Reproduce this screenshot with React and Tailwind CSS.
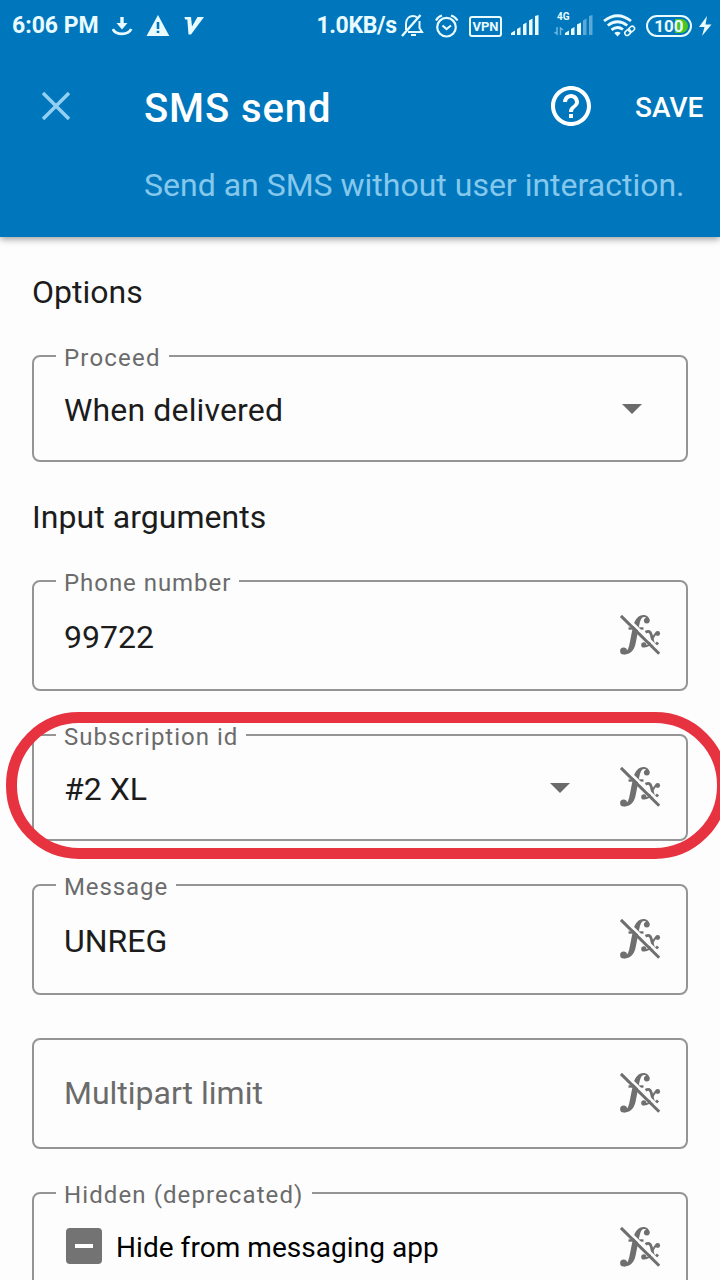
import React from "react";

function FxOff() {
  return (
    <svg className="mb-[2px] h-11 w-11 shrink-0" viewBox="0 0 44 44" fill="none">
      <path
        d="M31.500 8C31.500 4 28.500 2 25.500 2C20.500 2 17.500 6 15.800 11C14 17 13 24 11.500 31C10.500 36 9 39 6 39.200V41.500C12 41.500 16 37.500 17.500 31C19 24 20 17 21.500 11C22.500 7 23.500 4.200 26 4C27.500 4 28.300 4.600 28.500 5.500Z"
        fill="#6f6f6f"
      />
      <circle cx="28.800" cy="7.600" r="2.900" fill="#6f6f6f" />
      <circle cx="5.600" cy="38" r="3.500" fill="#6f6f6f" />
      <path d="M10.500 15.500H25.500" stroke="#6f6f6f" strokeWidth="2.400" />
      <path d="M27.500 19.300C30.500 17.600 32.500 18.500 33.200 21.500L35 29C35.600 32 37.500 32.500 40 29.500" stroke="#6f6f6f" strokeWidth="2.800" />
      <path d="M40 20C36 18.500 33.500 30.500 30 32.500C28.500 33.500 27 33 26 32" stroke="#6f6f6f" strokeWidth="2" />
      <circle cx="39.700" cy="20.500" r="2.400" fill="#6f6f6f" />
      <circle cx="25.800" cy="31.900" r="2.600" fill="#6f6f6f" />
      <path d="M5.500 1.500L43.500 38.500" stroke="#fdfdfd" strokeWidth="2.600" />
      <path d="M2.900 2.900L41.200 40.700" stroke="#6f6f6f" strokeWidth="3" />
    </svg>
  );
}

function Caret() {
  return (
    <svg className="h-[10px] w-5 shrink-0" viewBox="0 0 20 10">
      <path d="M0 0H20L10 10Z" fill="#6b6b6b" />
    </svg>
  );
}

function Field({ label, labelClass = "tracking-[1px]", boxClass, children }) {
  return (
    <div className={`relative flex shrink-0 items-center rounded-[8px] border-2 border-[#959595] pl-[30px] pr-6 ${boxClass}`}>
      {label && (
        <span className={`absolute -top-[13px] left-[22px] whitespace-nowrap bg-[#fdfdfd] px-2 text-[24px] leading-7 text-[#6b6b6b] ${labelClass}`}>
          {label}
        </span>
      )}
      {children}
    </div>
  );
}

function StatusBar() {
  return (
    <div className="flex h-[52px] items-center pl-3 text-[#e9fbff]">
      <span className="w-[101px] whitespace-nowrap text-[23px] font-bold leading-[30px]">6:06 PM</span>
      <svg className="h-[50px] w-[100px] shrink-0" viewBox="112 0 100 50" fill="none">
        <path d="M122 16V25" stroke="currentColor" strokeWidth="3.400" />
        <path d="M116.500 22H127.500L122 28.500Z" fill="currentColor" />
        <path d="M112.800 28C116 34.500 128 34.500 131.200 28" stroke="currentColor" strokeWidth="2.800" />
        <path d="M158 14L169.300 35H146.500Z" fill="currentColor" />
        <path d="M158 21V28M158 29.800V32" stroke="#0077bd" strokeWidth="2.600" />
        <path d="M184.500 16H191L192 25.500L197.500 16H204L191 33.500H188.500L187.300 18.500H185Z" fill="currentColor" />
      </svg>
      <span className="ml-[104px] w-[84px] whitespace-nowrap text-[23px] font-bold leading-[30px] tracking-[-0.35px]">1.0KB/s</span>
      <svg className="h-[50px] w-[68px] shrink-0" viewBox="400 0 68 50" fill="none" stroke="currentColor" strokeWidth="2">
        <path d="M402 35L420.500 14" strokeWidth="2.400" />
        <path d="M406 29V23C406 17 410 15 413 15Q415.500 15 417 16.500M419.500 20V27L422 31H408M411 34H416" />
        <circle cx="446.500" cy="26.200" r="9.300" strokeWidth="2.200" />
        <path d="M442.500 24.500L446.500 28L451 24.500M436 19.500Q438 15.500 442 14.500M451 14.500Q455 15.500 457.500 19.500" strokeWidth="2.200" />
      </svg>
      <span className="ml-[1px] flex h-[21px] w-[33px] shrink-0 items-center justify-center rounded-[3px] border-2 border-current text-[13px] font-bold leading-none">
        VPN
      </span>
      <svg className="h-[50px] w-[143px] shrink-0" viewBox="502 0 143 50" fill="none">
        <path d="M511 34V32L515 29.500V34ZM517 34V28L520.500 26V34ZM523 34V23.500L526.500 21.500V34ZM529 34V19.500L532.500 17.500V34ZM535 34V15L538.500 14V34Z" fill="currentColor" />
        <text x="557" y="19" fill="currentColor" fontSize="10" fontWeight="700" fontFamily="Roboto, sans-serif">4G</text>
        <path d="M557 26V33L554.500 31M560.500 34V27L563 29" stroke="#77b9dc" strokeWidth="1.400" />
        <path d="M565 34V32L569 29.500V34ZM571 34V28L574.500 26V34ZM577 34V23.500L581 21.500V34Z" fill="currentColor" />
        <path d="M583 34V19.500L586.500 17.500V34ZM589 34V15L592.500 14V34Z" fill="#5aa9d6" />
        <path d="M604 20Q617.500 9.500 631 20M607.800 24.500Q617.500 17 627.200 24.500M611.500 28.800Q617.500 24.300 623 28.500" stroke="currentColor" strokeWidth="2.800" />
        <path d="M614.300 32Q617.500 29.500 620.700 32L617.500 35.500Z" fill="currentColor" />
        <g stroke="currentColor" strokeWidth="1.500" transform="rotate(-42 629.500 30)">
          <rect x="624" y="27.700" width="6.500" height="4.600" rx="2.300" />
          <rect x="629" y="27.700" width="6.500" height="4.600" rx="2.300" />
        </g>
      </svg>
      <span className="ml-[1px] flex h-[22px] w-[46px] shrink-0 items-center justify-center rounded-full border-2 border-current">
        <span className="flex h-[14px] w-[38px] items-center justify-center rounded-full bg-[linear-gradient(90deg,transparent_65%,#4bc51f_65%)] text-[17px] font-bold leading-none">
          100
        </span>
      </span>
      <svg className="h-[50px] w-7 shrink-0" viewBox="693 0 27 50">
        <path d="M707.500 15L699.500 26H705L702.500 35L712 23.500H706Z" fill="currentColor" />
      </svg>
    </div>
  );
}

export default function App() {
  return (
    <div className="relative flex h-[1280px] w-[720px] flex-col overflow-hidden bg-[#fdfdfd] font-['Roboto',sans-serif] text-[#1c1c1c]">
      <header className="flex h-[237px] shrink-0 flex-col bg-[#0077bd] text-white shadow-[0_2px_7px_rgba(0,0,0,0.4)]">
        <StatusBar />
        <div className="-mt-[2px] flex h-[112px] items-center pr-4">
          <svg className="ml-[41px] h-[30px] w-[30px] shrink-0" viewBox="0 0 30 30">
            <path d="M2 2L28 28M28 2L2 28" stroke="#92cff0" strokeWidth="3.500" />
          </svg>
          <h1 className="ml-[73px] mt-[6px] grow whitespace-nowrap text-[40px] font-medium leading-[48px] tracking-[0.9px]">SMS send</h1>
          <svg className="h-12 w-12 shrink-0" viewBox="0 0 24 24" fill="currentColor">
            <path d="M11 18h2v-2h-2v2zm1-16C6.480 2 2 6.480 2 12s4.480 10 10 10 10-4.480 10-10S17.520 2 12 2zm0 18c-4.410 0-8-3.590-8-8s3.590-8 8-8 8 3.590 8 8-3.590 8-8 8zm0-14c-2.210 0-4 1.790-4 4h2c0-1.100.9-2 2-2s2 .9 2 2c0 2-3 1.750-3 5h2c0-2.250 3-2.500 3-5 0-2.210-1.790-4-4-4z" />
          </svg>
          <span className="ml-10 mt-[3px] w-[69px] whitespace-nowrap text-[28px] font-medium leading-8">SAVE</span>
        </div>
        <p className="ml-36 mt-[3px] whitespace-nowrap text-[32px] leading-10 text-[#86c8ec]">
          Send an SMS without user interaction.
        </p>
      </header>

      <main className="flex flex-col px-8 text-[32px] leading-10">
        <h2 className="mt-[35px]">Options</h2>
        <Field label="Proceed" labelClass="tracking-[1.2px]" boxClass="mt-[43px] h-[107px]">
          <span className="mt-[2px] grow tracking-[0.15px]">When delivered</span>
          <span className="mr-5 flex"><Caret /></span>
        </Field>

        <h2 className="mt-[35px] tracking-[0.05px]">Input arguments</h2>
        <Field label="Phone number" labelClass="tracking-[0.95px]" boxClass="mt-[43px] h-[111px]">
          <span className="mt-[2px] grow">99722</span>
          <FxOff />
        </Field>
        <Field label="Subscription id" boxClass="mt-[43px] h-[107px]">
          <span className="mt-[2px] grow">#2 XL</span>
          <Caret />
          <span className="ml-12 flex"><FxOff /></span>
        </Field>
        <Field label="Message" labelClass="tracking-[0.9px]" boxClass="mt-[43px] h-[111px]">
          <span className="mt-[2px] grow">UNREG</span>
          <FxOff />
        </Field>
        <Field boxClass="mt-[43px] h-[111px]">
          <span className="mb-[2px] grow text-[#6b6b6b]">Multipart limit</span>
          <FxOff />
        </Field>
        <Field label="Hidden (deprecated)" labelClass="tracking-[1.1px]" boxClass="mt-[43px] h-[111px]">
          <span className="mb-[3px] ml-[2px] flex h-9 w-9 items-center justify-center rounded bg-[#737373]">
            <span className="h-1 w-[18px] bg-white" />
          </span>
          <span className="ml-[14px] grow text-[28px] tracking-[0.05px] text-black">Hide from messaging app</span>
          <FxOff />
        </Field>
      </main>

      <div className="absolute left-[6px] top-[712px] h-[147px] w-[722px] rounded-[73px] border-[11px] border-[#e73340]" />
    </div>
  );
}
